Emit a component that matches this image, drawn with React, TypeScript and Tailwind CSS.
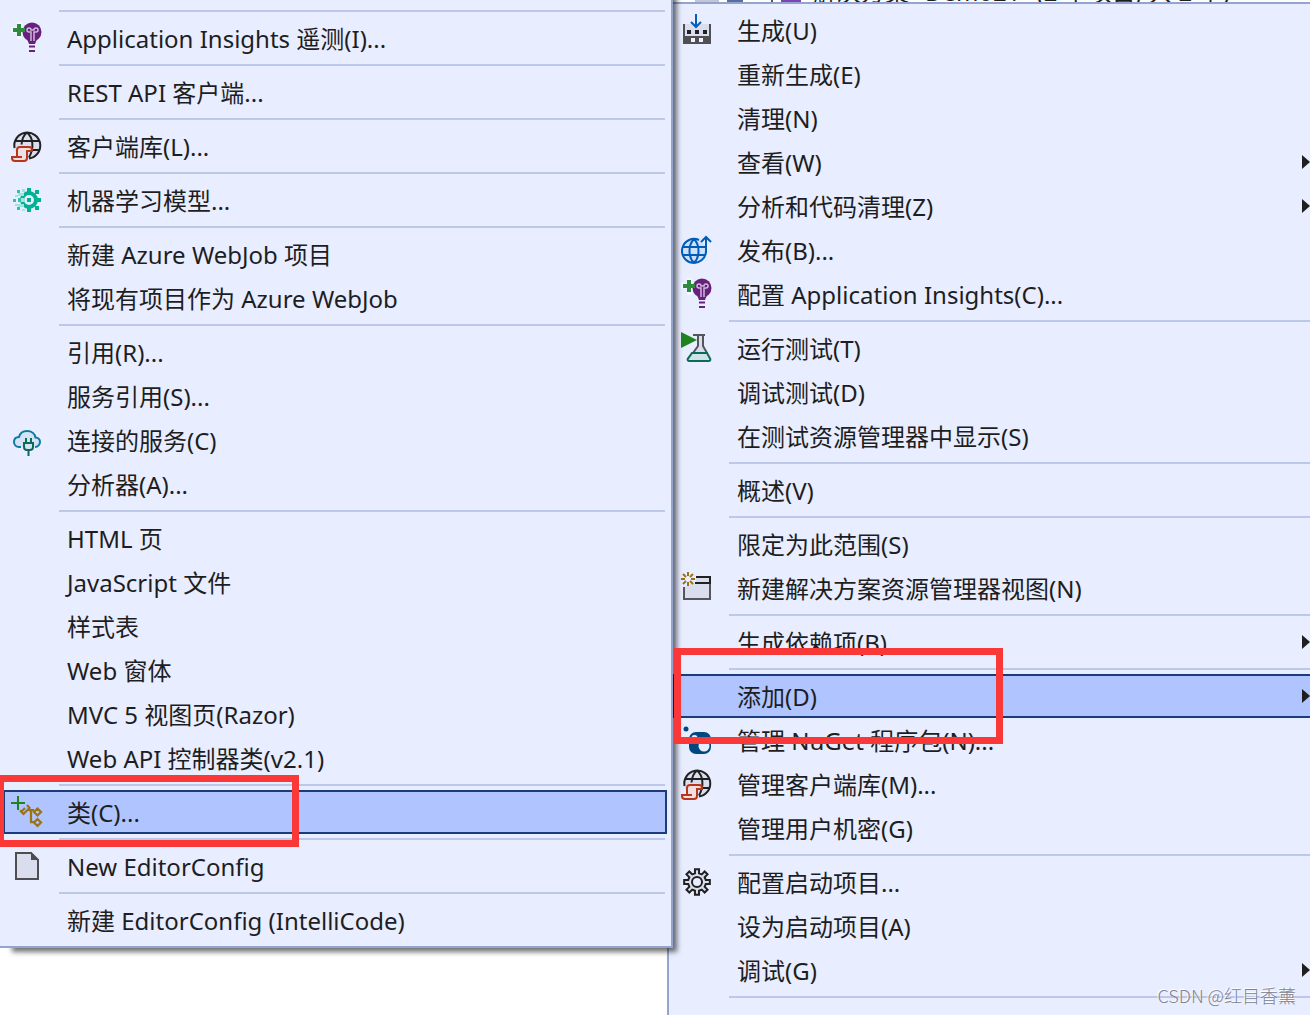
import type { ReactNode } from "react";

type Entry = {
  label?: string;
  icon?: ReactNode;
  separator?: boolean;
  submenu?: boolean;
  active?: boolean;
  frame?: string;
};

const sep: Entry = { separator: true };

function Icon({ children }: { children: ReactNode }) {
  return (
    <svg viewBox="0 0 32 32" className="size-8" fill="none" strokeWidth="2" aria-hidden="true">
      {children}
    </svg>
  );
}

const insightsIcon = (
  <Icon>
    <path d="M6 0h5v5h6v6h-6v6H6v-6H0V5h6z" fill="#f4f6ff" />
    <circle cx="21" cy="10" r="9.5" fill="#68217a" />
    <path d="M16 17h10l-2 5h-6z" fill="#68217a" />
    <path d="M20 19v-9h-2a2 2 0 1 1 2-2h3a2 2 0 1 1 2 2h-2v9" stroke="#cdb8dc" strokeWidth="1.5" />
    <path d="M18 24.5h6M18 29h6" stroke="#68217a" />
    <path d="M6 2h4v4h4v4h-4v4H6v-4H2V6h4z" fill="#2e8b3d" />
  </Icon>
);

const libraryIcon = (
  <Icon>
    <circle cx="16" cy="15.5" r="13" fill="#dadeee" />
    <path
      d="M3.5 18A13 13 0 1 1 18 28.5M4 11h24M22 20h6M16 2.5c-4 3-5 7-5.5 12M16 2.5c6 5 7.5 15 2 25"
      stroke="#212121"
    />
    <path
      d="M9 17h9a3 3 0 0 1 3 3v1h-5v7a3 3 0 0 1-3 3H4a3 3 0 0 1-3-3v-1h5v-7a3 3 0 0 1 3-3M6 27h4v1"
      fill="#f0dfe2"
      stroke="#b8371c"
    />
  </Icon>
);

const modelIcon = (
  <Icon>
    <circle cx="18" cy="16" r="7" stroke="#00b294" strokeWidth="4" />
    <path
      d="M16 4h4v4h-4zM16 24h4v4h-4zM26 14h4v4h-4zM24 6h4v4h-4zM24 22h4v4h-4zM16 14h4v4h-4z"
      fill="#00b294"
    />
    <path d="M7 9h6v3H7zM7 20h6v3H7zM10 14h4v4h-4z" fill="#a4e2dc" />
    <path d="M6 6h3v3H6zM6 23h3v3H6zM2 15h3v3H2zM7 14h3v4H7z" fill="#2fc2aa" />
    <path d="M11 5h3v3h-3zM11 25h3v2h-3zM4 11h3v2H4zM4 20h3v2H4z" fill="#a4e2dc" />
  </Icon>
);

const cloudIcon = (
  <Icon>
    <path
      d="M10 23H8a5 5 0 0 1-5-5c0-3 2-5 5-5 1-4 4-6 8-6 5 0 8 3 8.5 6.5C27 13.5 29 15.5 29 18s-2 5-5 5"
      fill="#d3e3f5"
      stroke="#0e7a9e"
    />
    <path
      d="M15 14v5M20 14v5M12 19h11M13 19v4a3 3 0 0 0 3 3h3a3 3 0 0 0 3-3v-4M17.5 26v6"
      fill="#d3e3f5"
      stroke="#0b6a58"
    />
  </Icon>
);

const classIcon = (
  <Icon>
    <path d="M7 0v14M0 7h14" stroke="#1e8420" />
    <path
      d="M9 14.5l3.5 3.5 6-6-2.5-3M10 16l4-4M18 14h5M20 14v12h4M26.5 12.5L30 16l-3.5 3.5L23 16zM26.5 23l3.500 3.5-3.5 3.5L23 26.5z"
      stroke="#9c7215"
      strokeWidth="2.25"
    />
  </Icon>
);

const fileIcon = (
  <Icon>
    <path d="M5 3h15l7 7v19H5z" fill="#dadded" stroke="#4d4d52" />
    <path d="M20 2l8 8h-8z" fill="#4d4d52" />
  </Icon>
);

const buildIcon = (
  <Icon>
    <path d="M4 10h24v12H4z" fill="#dadded" />
    <path d="M7 7h16l-8 8z" fill="#e8edff" />
    <path d="M2 10h2v12h24V10h2v20H2z" fill="#505054" />
    <path d="M6 16h4v4H6zM14 16h4v4h-4zM22 16h4v4h-4z" fill="#212121" />
    <path d="M10 24h4v4h-4zM18 24h4v4h-4z" fill="#f0f2ff" />
    <path d="M15 0v13M10 8l5 5 5-5" stroke="#005dba" />
  </Icon>
);

const publishIcon = (
  <Icon>
    <circle cx="13" cy="17" r="12" fill="#d0dffa" />
    <path
      d="M18 6A12 12 0 1 0 25 17M2 13h23M2 21h23M13 5c-6 6-6 18 0 24M13 5c6 6 6 18 0 24"
      stroke="#005dba"
    />
    <path d="M25 19V3M20 8l5-5 5 5" stroke="#005dba" />
  </Icon>
);

const testIcon = (
  <Icon>
    <path d="M17 3v11L7 27v2h22v-2L22 14V3z" fill="#dadded" />
    <path d="M12 3h12M17 3v11l-5 7M22 3v11l4 7" stroke="#55555a" />
    <path d="M11 21h15l3 5.5a1.5 1.5 0 0 1-1 2.5H8a1.5 1.5 0 0 1-1-2.5z" fill="#cfe2e6" stroke="#0b6a58" />
    <path d="M0 0l16 8-16 8z" fill="#1e8420" />
  </Icon>
);

const viewIcon = (
  <Icon>
    <path d="M3 15v12h26V5H15v6h-3z" fill="#dadded" />
    <path d="M3 15v12h26V12" stroke="#55555a" />
    <path d="M15 5h14v6H14" stroke="#212121" />
    <path d="M7 0v4M7 10v4M0 7h4M10 7h4M2 2l3 3M9 9l3 3M12 2L9 5M5 9l-3 3" stroke="#9c7215" />
  </Icon>
);

const nugetIcon = (
  <Icon>
    <circle cx="5" cy="5" r="2.5" fill="#004880" />
    <rect x="8" y="8" width="22" height="22" rx="7" fill="#004880" />
    <circle cx="13.5" cy="14" r="3" fill="#e8edff" />
    <circle cx="23" cy="22" r="5.5" fill="#e8edff" />
  </Icon>
);

// outline of an eight-toothed cog, centred in the 32 unit box
const cogPoints = Array.from({ length: 8 })
  .flatMap((_, i) =>
    [
      [9, -13],
      [13, -9],
      [13, 9],
      [9, 13],
    ].map(([r, deg]) => {
      const a = ((i * 45 + deg) * Math.PI) / 180;
      return `${16 + r * Math.cos(a)},${16 + r * Math.sin(a)}`;
    })
  )
  .join(" ");

const cogIcon = (
  <Icon>
    <polygon points={cogPoints} fill="#dadded" stroke="#212121" />
    <circle cx="16" cy="16" r="5" fill="#e8edff" stroke="#212121" />
  </Icon>
);

const addMenu: Entry[] = [
  sep,
  { label: "Application Insights 遥测(I)...", icon: insightsIcon },
  sep,
  { label: "REST API 客户端..." },
  sep,
  { label: "客户端库(L)...", icon: libraryIcon },
  sep,
  { label: "机器学习模型...", icon: modelIcon },
  sep,
  { label: "新建 Azure WebJob 项目" },
  { label: "将现有项目作为 Azure WebJob" },
  sep,
  { label: "引用(R)..." },
  { label: "服务引用(S)..." },
  { label: "连接的服务(C)", icon: cloudIcon },
  { label: "分析器(A)..." },
  sep,
  { label: "HTML 页" },
  { label: "JavaScript 文件" },
  { label: "样式表" },
  { label: "Web 窗体" },
  { label: "MVC 5 视图页(Razor)" },
  { label: "Web API 控制器类(v2.1)" },
  sep,
  {
    label: "类(C)...",
    icon: classIcon,
    active: true,
    frame: "-top-[17px] -left-2 h-[72px] w-[302px]",
  },
  sep,
  { label: "New EditorConfig", icon: fileIcon },
  sep,
  { label: "新建 EditorConfig (IntelliCode)" },
];

const projectMenu: Entry[] = [
  { label: "生成(U)", icon: buildIcon },
  { label: "重新生成(E)" },
  { label: "清理(N)" },
  { label: "查看(W)", submenu: true },
  { label: "分析和代码清理(Z)", submenu: true },
  { label: "发布(B)...", icon: publishIcon },
  { label: "配置 Application Insights(C)...", icon: insightsIcon },
  sep,
  { label: "运行测试(T)", icon: testIcon },
  { label: "调试测试(D)" },
  { label: "在测试资源管理器中显示(S)" },
  sep,
  { label: "概述(V)" },
  sep,
  { label: "限定为此范围(S)" },
  { label: "新建解决方案资源管理器视图(N)", icon: viewIcon },
  sep,
  { label: "生成依赖项(B)", submenu: true },
  sep,
  {
    label: "添加(D)",
    submenu: true,
    active: true,
    frame: "-top-7 -left-px h-24 w-[329px]",
  },
  { label: "管理 NuGet 程序包(N)...", icon: nugetIcon },
  { label: "管理客户端库(M)...", icon: libraryIcon },
  { label: "管理用户机密(G)" },
  sep,
  { label: "配置启动项目...", icon: cogIcon },
  { label: "设为启动项目(A)" },
  { label: "调试(G)", submenu: true },
  sep,
];

function MenuList({ entries }: { entries: Entry[] }) {
  return (
    <ul role="menu">
      {entries.map((entry, i) =>
        entry.separator ? (
          <li key={i} role="separator" className="my-1 mr-0.5 ml-14 h-0.5 bg-[#bdc8e8]" />
        ) : (
          <li key={i} role="none">
            <button
              type="button"
              role="menuitem"
              className={`relative flex h-11 w-full items-center border-2 text-left whitespace-nowrap ${
                entry.active ? "border-[#1c3b7a] bg-[#b0c5ff]" : "border-transparent"
              }`}
            >
              <span className="ml-1.5 w-14 shrink-0">{entry.icon}</span>
              <span className="flex-1 pt-0.5">{entry.label}</span>
              {entry.submenu && (
                <svg viewBox="0 0 8 14" className="h-3.5 w-2" fill="#1e1e1e" aria-hidden="true">
                  <path d="M0 0l8 7-8 7z" />
                </svg>
              )}
              {entry.frame && (
                <span className={`absolute z-20 border-[7px] border-[#fb3838] ${entry.frame}`} />
              )}
            </button>
          </li>
        )
      )}
    </ul>
  );
}

export default function App() {
  return (
    <main className="relative flex h-screen items-start overflow-hidden bg-white font-['Noto_Sans','Noto_Sans_CJK_SC',sans-serif] text-2xl text-[#1e1e1e]">
      {/* Submenu */}
      <nav className="relative z-10 -mt-5 -mr-1.5 min-w-0 flex-[664] border-r-2 border-b-2 border-[#93a5cd] bg-[#e8edff] pt-[26px] pr-1 pb-1 pl-[3px] shadow-[8px_8px_5px_-4px_rgba(0,0,0,0.55)]">
        <MenuList entries={addMenu} />
      </nav>

      <div className="flex min-h-screen min-w-0 flex-[643] flex-col">
        {/* Solution tree row that the menu covers */}
        <div className="flex h-0.5 items-end overflow-hidden bg-white pl-7">
          <span className="h-0.5 w-6 bg-[#c2c5d2]" />
          <span className="ml-2 h-0.5 w-4 bg-[#5d6c9e]" />
          <span className="ml-7 h-0.5 w-0.5 bg-[#55555a]" />
          <span className="ml-2 h-0.5 w-5 bg-[#7a45b5]" />
          <span className="ml-3 leading-5 whitespace-nowrap">解决方案 "Demo21" (2 个项目, 共 2 个)</span>
        </div>
        <nav className="-mr-0.5 flex-1 border-t-2 border-l-2 border-[#93a5cd] bg-[#e8edff] pt-1 pl-1">
          <MenuList entries={projectMenu} />
        </nav>
      </div>

      <p className="absolute right-3.5 bottom-1.5 z-20 font-['Noto_Sans_CJK_SC',sans-serif] text-lg leading-7 font-light text-[#7e828e] [text-shadow:-1px_-1px_0_#fff]">
        CSDN @红目香薰
      </p>
    </main>
  );
}
